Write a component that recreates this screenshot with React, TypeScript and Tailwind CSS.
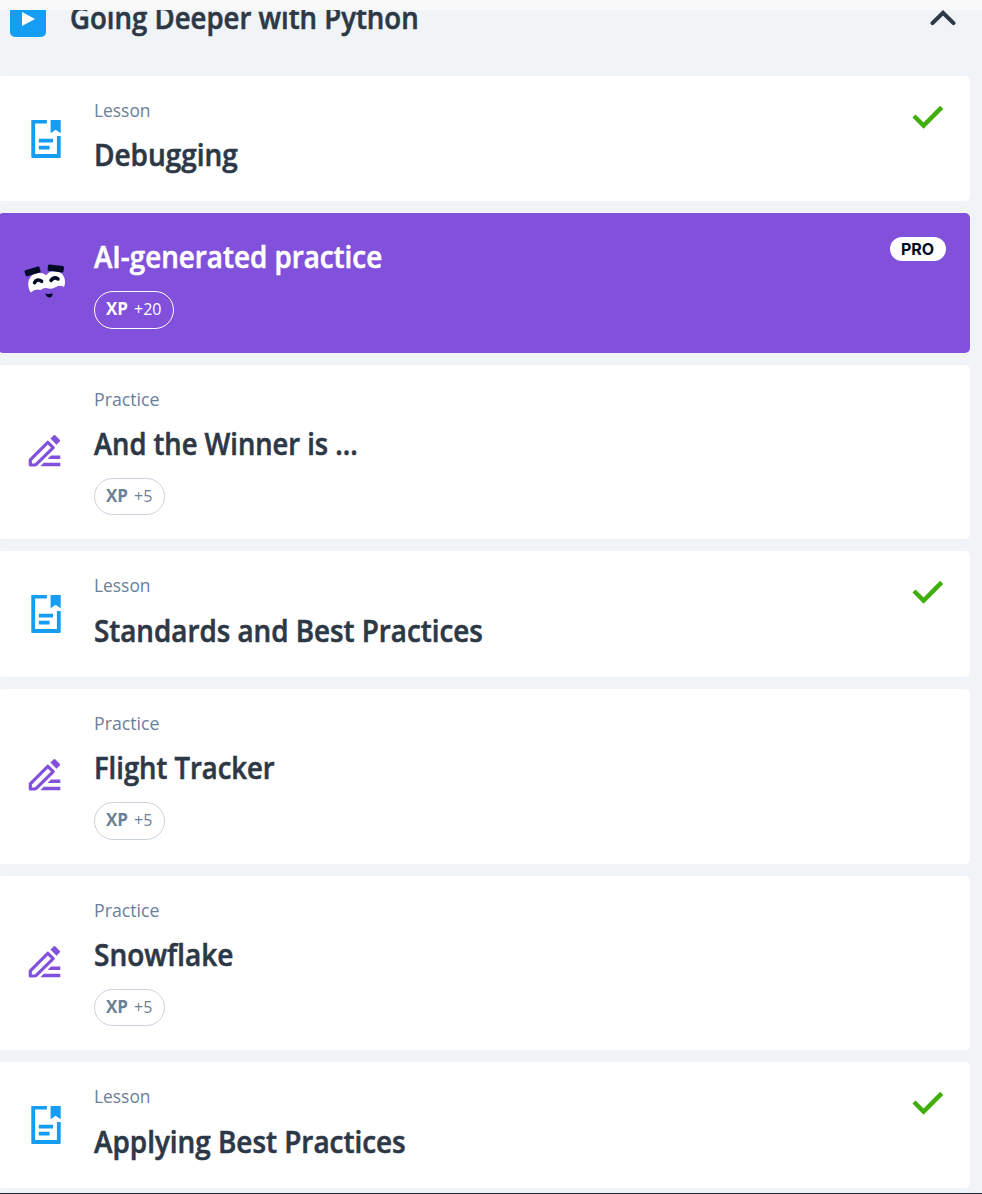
type Kind = "lesson" | "practice" | "ai";

interface Item {
  kind: Kind;
  title: string;
  height: string;
  titleStyle: string;
  pill?: string;
}

const items: Item[] = [
  { kind: "lesson", title: "Debugging", height: "h-[125px]", titleStyle: "-mt-px mb-px scale-x-[0.902]" },
  { kind: "ai", title: "AI-generated practice", height: "h-[140px]", titleStyle: "-mt-px mb-px scale-x-[0.896]", pill: "h-[38px] w-20" },
  { kind: "practice", title: "And the Winner is ...", height: "h-[174px]", titleStyle: "-mt-px mb-px scale-x-[0.881]", pill: "h-[37px] w-[71px]" },
  { kind: "lesson", title: "Standards and Best Practices", height: "h-[126px]", titleStyle: "scale-x-[0.896]" },
  { kind: "practice", title: "Flight Tracker", height: "h-[175px]", titleStyle: "-mt-px mb-px scale-x-[0.884]", pill: "h-[38px] w-[71px]" },
  { kind: "practice", title: "Snowflake", height: "h-[174px]", titleStyle: "-mt-px mb-px scale-x-[0.903]", pill: "h-[37px] w-[71px]" },
  { kind: "lesson", title: "Applying Best Practices", height: "h-[126px]", titleStyle: "scale-x-[0.899]" },
];

function LessonIcon() {
  return (
    <svg width="32" height="40" viewBox="0 0 32 40" fill="#149df2">
      <path d="M1.3 1H16.9V4.4H5.1V35H26.9V17H30.7V38Q30.7 39 29.8 39H2.2Q1.3 39 1.3 38Z" />
      <path d="M20.6 1H30.7V14.3L25.6 10.8L20.6 14.3Z" />
      <path d="M8.8 19.8H23V23.4H8.8ZM8.8 26.8H19.6V30.4H8.8Z" />
    </svg>
  );
}

function PencilIcon() {
  return (
    <svg width="34" height="34" viewBox="0 0 34 34" fill="none">
      <path d="M2.3 31V25.8L19.8 8.3L25.2 13.7L9.2 29.4Q8.2 30.7 6.2 31Z" stroke="#8251db" strokeWidth="3.2" strokeLinejoin="round" />
      <path d="M22.4 4.6L25.6 1.4Q26.5 .6 27.4 1.4L31.7 5.7Q32.5 6.6 31.7 7.5L28.5 10.7Z" fill="#8251db" />
      <path d="M23 21.5H32.3V25H19.5ZM15.8 28.7H32.3V32.2H12.3Z" fill="#8251db" />
    </svg>
  );
}

function FaceIcon() {
  return (
    <svg width="44" height="38" viewBox="0 0 44 38">
      <path d="M6.8 28.5C1.5 20 5 9.5 14.5 9Q19.5 8.7 22.3 11.3Q25 7 31 7C39.8 7.5 43 16.5 40 23Q36 20.5 32 23Q28 25.5 25 24.5Q20 23 16.5 26Q11 24.5 6.8 28.5Z" fill="white" />
      <rect x=".8" y="4.2" width="15.5" height="6.3" rx="1.2" transform="rotate(-17 8.5 7.3)" fill="#020b26" />
      <rect x="23.8" y="1.2" width="16" height="6.4" rx="1.2" transform="rotate(7 31.8 4.4)" fill="#020b26" />
      <path d="M10.6 18.7Q13.2 14.2 17.6 17.3M27 16.4Q30 12.2 34 14.9" fill="none" stroke="#020b26" strokeWidth="3.6" strokeLinecap="round" />
      <path d="M21.3 29.5Q25 30.5 28.8 29.2Q28.4 33.4 25.5 33.6Q22.5 33.6 21.3 29.5Z" fill="#020b26" />
    </svg>
  );
}

function Check() {
  return (
    <svg width="32" height="24" viewBox="0 0 32 24" fill="none" stroke="#40ae0d" strokeWidth="4.4">
      <path d="M2 11L11.6 20.6L29.7 2.4" />
    </svg>
  );
}

function Card({ item }: { item: Item }) {
  const ai = item.kind === "ai";
  const iconPlace = item.kind === "lesson" ? "pt-[43px] pl-8" : ai ? "pt-[51px] pl-[26px]" : "pt-[69px] pl-[30px]";
  return (
    <article className={`-ml-0.5 flex w-[972px] shrink-0 rounded-[5px] ${item.height} ${ai ? "bg-[#8251db] text-white" : "bg-white text-[#2d3846]"}`}>
      <div className={`w-[95.5px] shrink-0 ${iconPlace}`}>
        {item.kind === "lesson" ? <LessonIcon /> : ai ? <FaceIcon /> : <PencilIcon />}
      </div>
      <div className={`flex flex-1 flex-col items-start ${ai ? "pt-6" : "pt-[21px]"}`}>
        {!ai && (
          <p className={`mb-[18px] h-5 origin-left text-[18px] leading-[26px] text-[#6b7f99] ${item.kind === "lesson" ? "scale-x-[0.965]" : "scale-x-[0.985]"}`}>
            {item.kind === "lesson" ? "Lesson" : "Practice"}
          </p>
        )}
        <h2 className={`h-10 origin-left whitespace-nowrap text-[31px] leading-10 font-semibold [-webkit-text-stroke:0.6px_currentColor] ${item.titleStyle}`}>{item.title}</h2>
        {item.pill && (
          <div className={`mt-3.5 ml-[0.5px] flex items-center gap-1.5 rounded-full border pb-0.5 pl-[11px] text-[17px] ${item.pill} ${ai ? "border-white" : "border-[#cbd3dc] text-[#6b7f99]"}`}>
            <span className="font-bold">XP</span>
            <span className="origin-left scale-x-[0.94]">{ai ? "+20" : "+5"}</span>
          </div>
        )}
      </div>
      {item.kind === "lesson" && (
        <div className="pr-[26px] pt-[29px]"><Check /></div>
      )}
      {ai && (
        <div className="mr-6 mt-6 flex h-6 w-14 items-center justify-center rounded-full bg-white pr-px font-['Inter'] text-[16px] font-bold text-[#020b26]">PRO</div>
      )}
    </article>
  );
}

export default function App() {
  return (
    <main className="flex h-[1194px] w-[982px] flex-col overflow-hidden bg-[#f0f4f7] font-['Open_Sans',sans-serif]">
      <div className="h-2.5 shrink-0 bg-[#f9f9f9]" />
      <header className="flex h-[66px] shrink-0 items-start overflow-hidden pl-2.5 text-[#2d3846]">
        <div className="-mt-[9px] flex h-9 w-9 items-center justify-center rounded-[5px] bg-[#149df2]">
          <svg width="14" height="16" viewBox="0 0 14 16"><path d="M1 1L14 8L1 15Z" fill="white" /></svg>
        </div>
        <h1 className="-mt-[13px] ml-[23.5px] flex-1 origin-left scale-x-[0.889] whitespace-nowrap text-[31px] leading-10 font-semibold [-webkit-text-stroke:0.6px_currentColor]">Going Deeper with Python</h1>
        <svg className="mr-[26px]" width="26" height="16" viewBox="0 0 26 16" fill="none">
          <path d="M2.5 13.2L13 2.8L23.5 13.2" stroke="#2d3846" strokeWidth="4" strokeLinecap="round" />
        </svg>
      </header>
      <section className="flex flex-col gap-3">
        {items.map((item) => <Card key={item.title} item={item} />)}
      </section>
      <div className="mt-[5px] h-px shrink-0 bg-[#20252b]" />
    </main>
  );
}
